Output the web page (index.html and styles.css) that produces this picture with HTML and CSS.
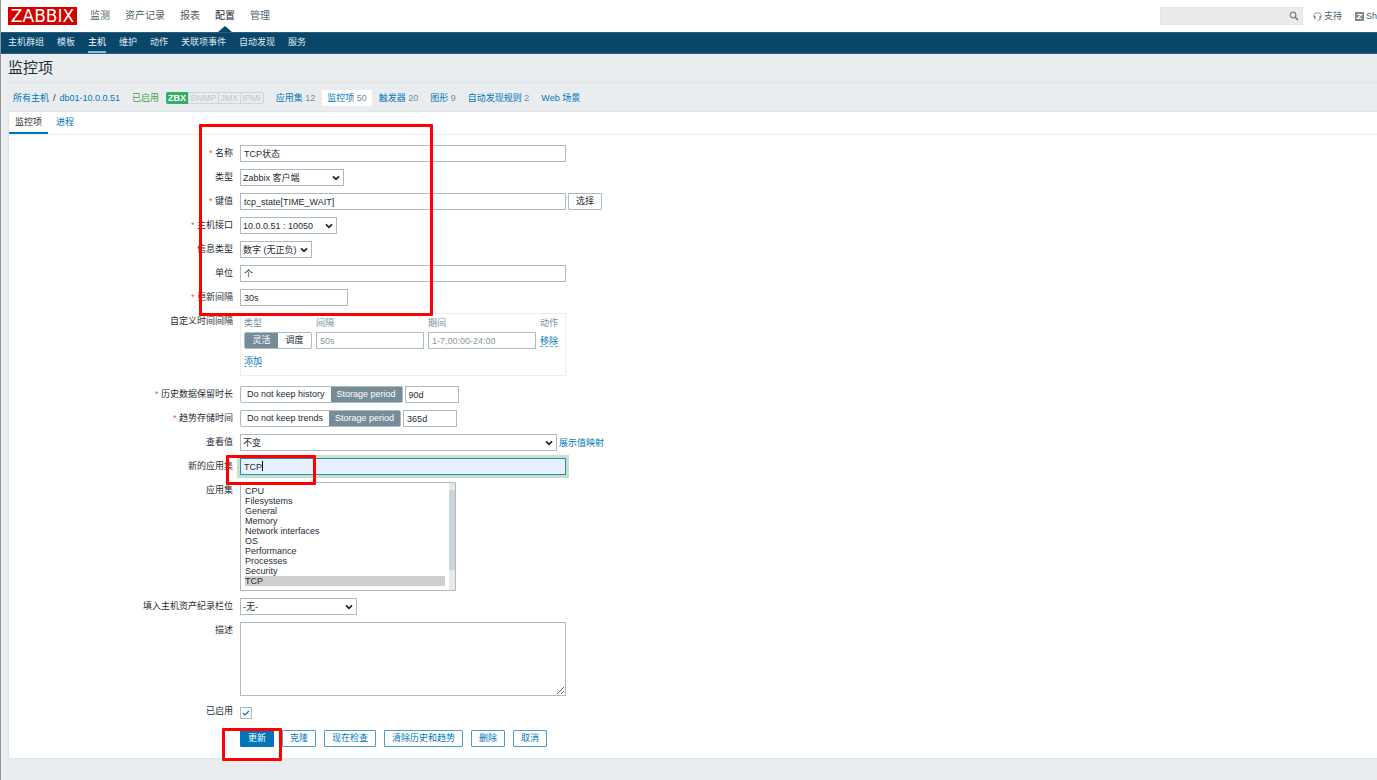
FILE: index.html
```html
<!DOCTYPE html>
<html lang="zh-CN">
<head>
<meta charset="utf-8">
<title>监控项</title>
<link rel="stylesheet" href="styles.css">
</head>
<body>
<header class="top">
  <a class="logo" href="#">ZABBIX</a>
  <nav class="main-nav">
    <a href="#">监测</a><a href="#">资产记录</a><a href="#">报表</a><a href="#" class="active">配置</a><a href="#">管理</a>
  </nav>
  <div class="tools">
    <div class="search">
      <input type="text" aria-label="search">
      <svg class="search-icon" viewBox="0 0 10 10" width="10" height="10"><circle cx="4" cy="4" r="2.8" fill="none" stroke="#768d99" stroke-width="1.3"/><path d="M6 6l3 3" stroke="#768d99" stroke-width="1.8"/></svg>
    </div>
    <a class="tool" href="#"><svg viewBox="0 0 9 9" width="9" height="9"><path d="M1.200 5.500C.3 2.700 2 .8 4.500 .8s4.200 1.900 3.300 4.700M7.300 6.500C7 7.800 6 8.300 4.500 8.300" fill="none" stroke="#768d99" stroke-width="1"/><path d="M.7 4h1.900v3.300H1.500zM8.300 4H6.400v3.300h1.100z" fill="#768d99"/></svg>支持</a>
    <a class="tool" href="#"><svg viewBox="0 0 9 9" width="9" height="9"><rect width="9" height="9" fill="#768d99"/><path d="M2.500 2.500h4l-4 4h4" fill="none" stroke="#fff" stroke-width="1.200"/></svg>Sh</a>
  </div>
</header>
<nav class="sub-nav">
  <a href="#">主机群组</a><a href="#">模板</a><a href="#" class="active">主机</a><a href="#">维护</a><a href="#">动作</a><a href="#">关联项事件</a><a href="#">自动发现</a><a href="#">服务</a>
</nav>
<main>
  <h1>监控项</h1>
  <div class="crumbs">
    <div class="path"><a href="#">所有主机</a><span>/</span><a href="#">db01-10.0.0.51</a></div>
    <span class="enabled">已启用</span>
    <div class="badges"><span class="on">ZBX</span><span>SNMP</span><span>JMX</span><span>IPMI</span></div>
    <span><a href="#">应用集</a> 12</span>
    <span class="selected"><a href="#">监控项</a> 50</span>
    <span><a href="#">触发器</a> 20</span>
    <span><a href="#">图形</a> 9</span>
    <span><a href="#">自动发现规则</a> 2</span>
    <span><a href="#">Web 场景</a></span>
  </div>
  <section class="panel">
    <div class="tabs"><a href="#" class="active">监控项</a><a href="#">进程</a></div>
    <form class="form">
      <div class="row"><label class="req" for="name">名称</label><div class="field"><input id="name" class="wide" type="text" value="TCP状态"></div></div>
      <div class="row"><label for="type">类型</label><div class="field"><select id="type" class="w-type"><option>Zabbix 客户端</option></select></div></div>
      <div class="row"><label class="req" for="key">键值</label><div class="field"><input id="key" class="wide" type="text" value="tcp_state[TIME_WAIT]"><button type="button" class="grey">选择</button></div></div>
      <div class="row"><label class="req" for="iface">主机接口</label><div class="field"><select id="iface" class="w-iface"><option>10.0.0.51 : 10050</option></select></div></div>
      <div class="row"><label for="vtype">信息类型</label><div class="field"><select id="vtype" class="w-value"><option>数字 (无正负)</option></select></div></div>
      <div class="row"><label for="units">单位</label><div class="field"><input id="units" class="wide" type="text" value="个"></div></div>
      <div class="row"><label class="req" for="delay">更新间隔</label><div class="field"><input id="delay" class="medium" type="text" value="30s"></div></div>
      <div class="row spaced"><span class="label">自定义时间间隔</span>
        <div class="intervals">
          <table>
            <thead><tr><th>类型</th><th>间隔</th><th>期间</th><th>动作</th></tr></thead>
            <tbody><tr>
              <td><div class="segment"><input type="radio" name="itype" id="flex" checked><label for="flex">灵活</label><input type="radio" name="itype" id="sched"><label for="sched">调度</label></div></td>
              <td><input class="medium" type="text" placeholder="50s" aria-label="间隔"></td>
              <td><input class="medium" type="text" placeholder="1-7,00:00-24:00" aria-label="期间"></td>
              <td><a class="dotted" href="#">移除</a></td>
            </tr></tbody>
          </table>
          <a class="dotted" href="#">添加</a>
        </div>
      </div>
      <div class="row"><label class="req" for="history">历史数据保留时长</label><div class="field"><div class="segment"><input type="radio" name="hist" id="h0"><label for="h0">Do not keep history</label><input type="radio" name="hist" id="h1" checked><label for="h1">Storage period</label></div><input id="history" class="short" type="text" value="90d"></div></div>
      <div class="row"><label class="req" for="trends">趋势存储时间</label><div class="field"><div class="segment"><input type="radio" name="trend" id="t0"><label for="t0">Do not keep trends</label><input type="radio" name="trend" id="t1" checked><label for="t1">Storage period</label></div><input id="trends" class="short" type="text" value="365d"></div></div>
      <div class="row"><label for="show">查看值</label><div class="field"><select id="show" class="w-show"><option>不变</option></select><a href="#">展示值映射</a></div></div>
      <div class="row"><label for="newapp">新的应用集</label><div class="field"><input id="newapp" class="wide focused" type="text" value="TCP"><span class="caret"></span><i class="mark mark-app"></i></div></div>
      <div class="row"><label for="apps">应用集</label><div class="field"><div class="list-box"><select id="apps" class="list" multiple size="10"><option>CPU</option><option>Filesystems</option><option>General</option><option>Memory</option><option>Network interfaces</option><option>OS</option><option>Performance</option><option>Processes</option><option>Security</option><option selected>TCP</option></select><span class="scrollbar"></span></div></div></div>
      <div class="row"><label for="inv">填入主机资产纪录栏位</label><div class="field"><select id="inv" class="w-inv"><option>-无-</option></select></div></div>
      <div class="row"><label for="desc">描述</label><div class="field"><textarea id="desc" class="wide"></textarea></div></div>
      <div class="row"><label for="on">已启用</label><div class="field"><input id="on" type="checkbox" checked></div></div>
      <div class="row"><span></span><div class="actions"><button type="submit" class="primary">更新</button><button type="button">克隆</button><button type="button">现在检查</button><button type="button">清除历史和趋势</button><button type="button">删除</button><button type="button">取消</button><i class="mark mark-save"></i></div></div>
      <i class="mark mark-fields"></i>
    </form>
  </section>
</main>
</body>
</html>
```
FILE: styles.css
```css
* { box-sizing: border-box; }
html { background: #e9edf0; }
body {
  margin: 0;
  min-height: 100vh;
  border-left: 1px solid #919599;
  background: #e9edf0;
  color: #1f2c33;
  font: 9px/12px "Liberation Sans", "Noto Sans CJK SC", sans-serif;
  overflow-x: hidden;
}
a { color: #0275b8; text-decoration: none; }
input, select, textarea, button { font: inherit; color: inherit; margin: 0; }
input[type="text"], select, textarea { height: 17px; border: 1px solid #acbbc2; border-radius: 0; background: #fff; }
input[type="text"] { padding: 0 3px; }
input::placeholder { color: #8d969b; }

.top { display: flex; align-items: center; height: 32px; padding-left: 7px; background: #fff; }
.logo {
  width: 69px;
  height: 18px;
  background: #d40000;
  color: #fff;
  font: 17px/18px "DejaVu Sans", sans-serif;
  text-align: center;
}
.main-nav { display: flex; align-self: stretch; gap: 15px; margin-left: 13px; font-size: 10px; line-height: 32px; }
.main-nav a { position: relative; color: #4f5f69; }
.main-nav .active { color: #1f2c33; }
.main-nav .active::after {
  content: "";
  position: absolute;
  bottom: 0;
  left: 50%;
  margin-left: -7px;
  border: 7px solid transparent;
  border-top: 0;
  border-bottom: 6px solid #0a466a;
}
.tools { display: flex; align-items: center; margin-left: auto; color: #5b6b75; }
.search { position: relative; margin-right: 10px; }
.search input[type="text"] { display: block; width: 143px; height: 18px; border-color: #e6e6e6; background: #ebebeb; }
.search-icon { position: absolute; right: 4px; top: 4px; }
.tool { display: flex; align-items: center; gap: 2px; color: #4f5f69; }
.tool + .tool { margin-left: 13px; }
.tool svg { flex: none; }

.sub-nav {
  display: flex;
  gap: 13px;
  height: 22px;
  padding-left: 7px;
  background: #0a466a;
  border-top: 1px solid #2c6080;
  border-bottom: 1px solid #2c6080;
  line-height: 19px;
}
.sub-nav a { color: #dfe9ef; }
.sub-nav .active { color: #fff; border-bottom: 2px solid #7dc2ee; }

main { padding-left: 7px; }
h1 { margin: 0; padding: 4px 0; border-bottom: 1px solid #dfe4e7; font-size: 15px; line-height: 20px; font-weight: normal; }
.crumbs { display: flex; align-items: center; gap: 12px; height: 28px; padding: 1px 0 0 5px; color: #768d99; }
.path { display: flex; gap: 4px; color: #1f2c33; }
.enabled { color: #429e47; }
.badges { display: flex; margin: 0 0 0 -5px; border: 1px solid #ccd5d9; border-radius: 2px; line-height: 10px; color: #bfc8cd; }
.badges span { padding: 0 2px 0 1px; border-left: 1px solid #ccd5d9; }
.badges .on { margin: -1px 0 -1px -1px; padding: 1px 2px; border: 0; border-radius: 2px 0 0 2px; background: #34af67; color: #fff; font-weight: bold; }
.crumbs .selected { margin: 0 -5px; padding: 2px 5px; background: #fff; }

.panel { border: 1px solid #dfe4e7; border-right: 0; background: #fff; }
.tabs { display: flex; height: 23px; border-bottom: 1px solid #ebeef0; line-height: 20px; }
.tabs a { padding: 0 8px; }
.tabs .active { height: 22px; border-bottom: 2px solid #0275b8; color: #1f2c33; padding: 0 6px; }

.form { position: relative; display: flex; flex-direction: column; gap: 7px; padding: 10px 0 11px; }
.row { display: grid; grid-template-columns: 224px 1fr; column-gap: 7px; }
.row > label, .label { text-align: right; line-height: 17px; }
.req::before { content: "* "; color: #e45959; }
.field { position: relative; display: flex; align-items: center; gap: 2px; }
.spaced { margin-bottom: 3px; }

.wide { width: 326px; }
.medium { width: 108px; }
.short { width: 54px; }
select {
  appearance: none;
  padding: 0 14px 0 2px;
  background: #fff url("data:image/svg+xml,%3Csvg xmlns='http://www.w3.org/2000/svg' viewBox='0 0 8 6'%3E%3Cpath d='M1 1.300l3 3 3-3' fill='none' stroke='%23222' stroke-width='1.700'/%3E%3C/svg%3E") right 3px center / 8px 6px no-repeat;
}
.w-type { width: 104px; }
.w-iface { width: 97px; }
.w-value { width: 72px; }
.w-show { width: 317px; }
.w-inv { width: 117px; }
textarea.wide { display: block; height: 74px; resize: vertical; }
input[type="text"].focused { border-color: #2f86b8; background: #e8f0fe; box-shadow: 0 0 0 3px #c5e3c8; outline: 0; }
.caret { position: absolute; left: 22px; top: 3px; width: 1px; height: 10px; background: #000; }

.list-box { position: relative; width: 216px; }
select.list { display: block; width: 100%; height: 109px; padding: 3px 10px 0 4px; border-radius: 1px; background: #fff; overflow: hidden; }
.list option { min-height: 0; padding: 0; line-height: 10px; }
.list option:checked { background: #cecece; color: #1f2c33; }
.scrollbar { position: absolute; top: 1px; right: 1px; bottom: 1px; width: 6px; padding-top: 7px; background: #e9e9e9; }
.scrollbar::before { content: ""; display: block; height: 80px; background: #ccd5d9; }

.intervals { width: 326px; height: 63px; padding: 2px 3px; border: 1px solid #ebeef0; }
.intervals table { border-collapse: collapse; margin-bottom: 6px; }
.intervals th { padding: 1px 0 3px; font-weight: normal; line-height: 12px; text-align: left; color: #768d99; }
.intervals td { padding: 0 4px 0 0; }
.intervals td:last-child { padding: 0; }
.intervals td input { display: block; }
.dotted { border-bottom: 1px dashed #6ab0d8; }

.segment { display: flex; border: 1px solid #acbbc2; border-radius: 2px; }
.segment input { position: absolute; opacity: 0; pointer-events: none; }
.segment label { padding: 0 6px; line-height: 15px; text-align: center; }
.segment input:checked + label { background: #768d99; color: #fff; }
.intervals .segment { width: 68px; }
.intervals .segment label { flex: 1; }

input[type="checkbox"] { appearance: none; width: 12px; height: 12px; margin: 4px 0; border: 1px solid #acbbc2; }
input[type="checkbox"]:checked {
  background: url("data:image/svg+xml,%3Csvg xmlns='http://www.w3.org/2000/svg' viewBox='0 0 10 10'%3E%3Cpath d='M2 5l2 2 4-4' fill='none' stroke='%230275b8' stroke-width='1.2'/%3E%3C/svg%3E") center / 10px no-repeat;
}

button { height: 17px; padding: 0 7px; border: 1px solid #4a9dcd; border-radius: 1px; background: #fff; color: #0275b8; line-height: 15px; }
button.grey { border-color: #acbbc2; color: #1f2c33; }
button.primary { border-color: #0275b8; background: #0275b8; color: #fff; }
.actions { position: relative; display: flex; gap: 8px; }
.mark { position: absolute; border: 3px solid #fe0000; border-radius: 1px; pointer-events: none; }
.mark-fields { left: 190px; top: -11px; width: 234px; height: 192px; }
.mark-app { left: -14px; top: -3px; width: 90px; height: 30px; z-index: 1; }
.mark-save { left: -18px; top: -2px; width: 60px; height: 33px; }
```
